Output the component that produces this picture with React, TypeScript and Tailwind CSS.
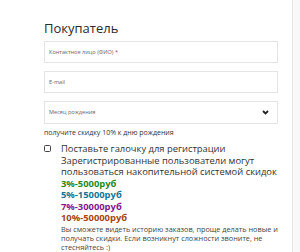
const tiers = [
  { label: "3%-5000руб", color: "text-[#1f8a1f]" },
  { label: "5%-15000руб", color: "text-[#147692]" },
  { label: "7%-30000руб", color: "text-[#7d1a8c]" },
  { label: "10%-50000руб", color: "text-[#a4460f]" },
];

export default function App() {
  return (
    <div className="flex h-[252px] w-[300px] overflow-hidden bg-white font-['Open_Sans',sans-serif] text-[#333]">
      <div className="w-[292px] pl-[44px] pr-[14px] pt-[19px]">
        <h2 className="text-[13px] leading-[18px] text-[#2b2b2b]">Покупатель</h2>
        <div className="mt-[4px] flex flex-col gap-[8px]">
          <div className="flex h-[22px] items-center border border-[#e4e4e4] px-[4px] text-[5.6px] text-[#666]">
            Контактное лицо (ФИО) *
          </div>
          <div className="flex h-[22px] items-center border border-[#e4e4e4] px-[4px] text-[5.6px] text-[#666]">
            E-mail
          </div>
          <div className="flex h-[23px] items-center justify-between border border-[#e4e4e4] pl-[4px] pr-[8px] text-[5.6px] text-[#666]">
            <span>Месяц рождения</span>
            <svg width="7" height="5" viewBox="0 0 7 5">
              <path d="M1 1 L3.5 3.5 L6 1" fill="none" stroke="#222" strokeWidth="1.8" />
            </svg>
          </div>
        </div>
        <p className="mt-[4px] text-[7px] leading-[10px] text-[#333]">получите скидку 10% к дню рождения</p>
        <div className="mt-[5px] flex gap-[10px]">
          <div className="mt-[2px] h-[7px] w-[7px] shrink-0 rounded-[1.5px] border-[1.5px] border-[#444]" />
          <div className="text-[9.4px] leading-[11.5px] text-[#333]">
            <div>Поставьте галочку для регистрации</div>
            <div>Зарегистрированные пользователи могут</div>
            <div>пользоваться накопительной системой скидок</div>
            {tiers.map((t) => (
              <div key={t.label} className={`font-bold ${t.color}`}>
                {t.label}
              </div>
            ))}
            <div className="mt-[1px] whitespace-nowrap text-[7.3px] leading-[9px] text-[#444]">
              <div>Вы сможете видеть историю заказов, проще делать новые и</div>
              <div>получать скидки. Если возникнут сложности звоните, не</div>
              <div>стесняйтесь :)</div>
            </div>
          </div>
        </div>
      </div>
      <div className="w-[8px] border-l border-[#e6e6e6] bg-[#f8f8f8]" />
    </div>
  );
}
